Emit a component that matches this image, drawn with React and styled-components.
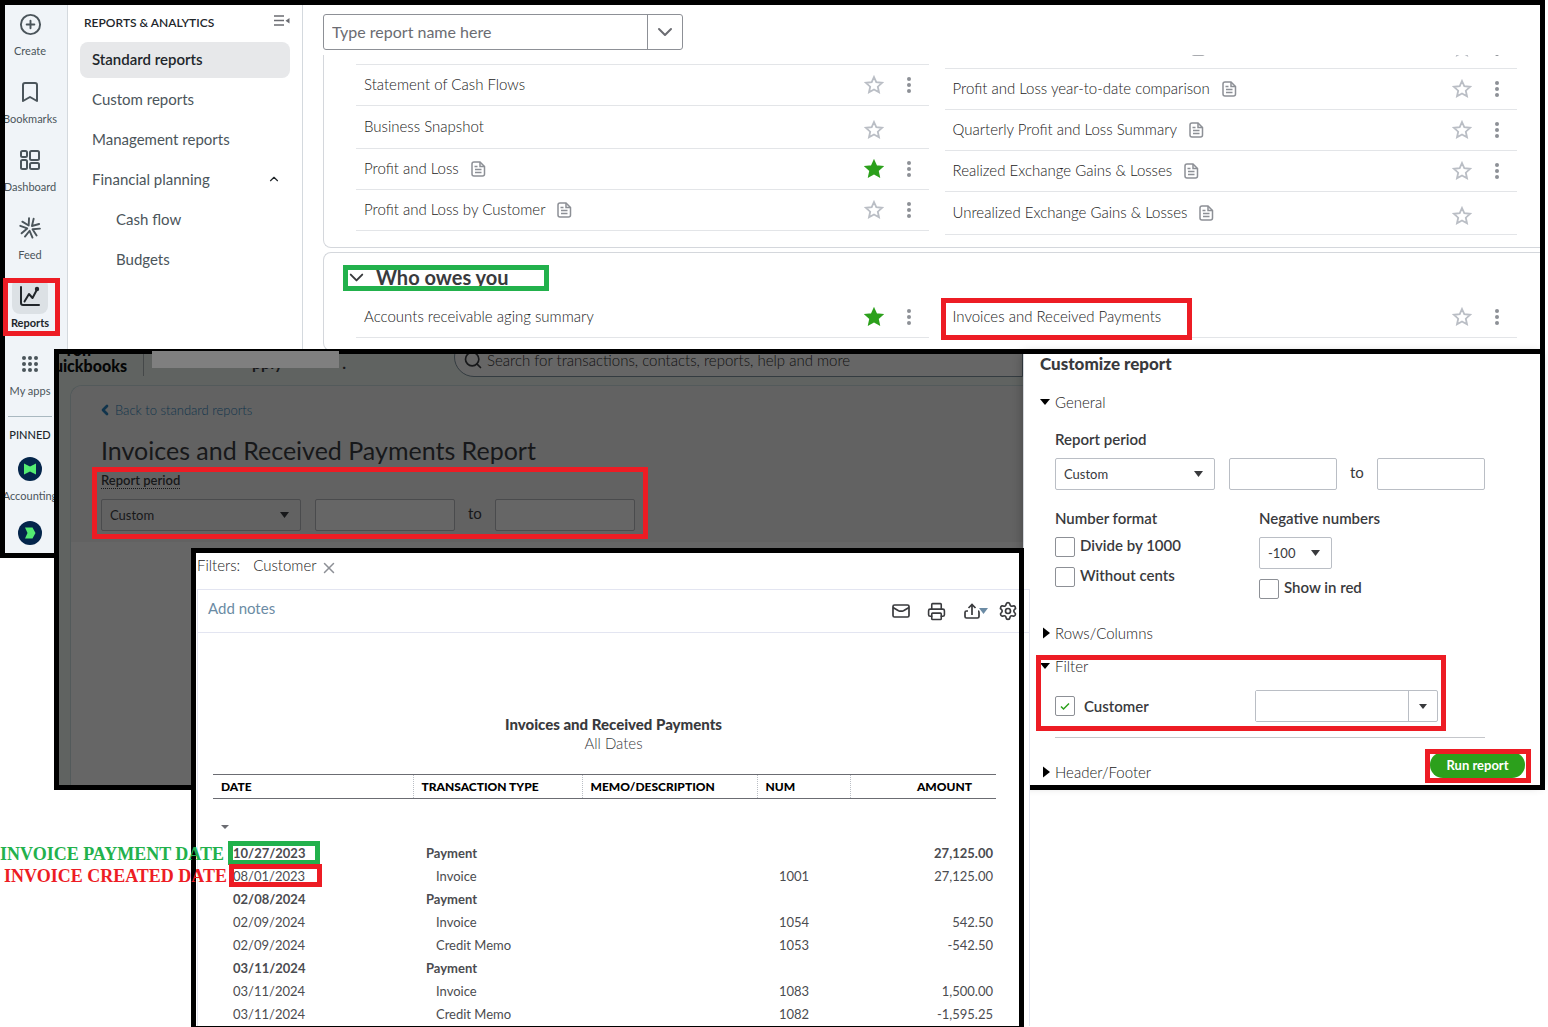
import React from "react";
import styled, { createGlobalStyle, css } from "styled-components";
import {
  Bookmark,
  ChevronDown,
  ChevronLeft,
  ChevronUp,
  CirclePlus,
  Printer,
  Search,
  Settings,
  X
} from "lucide-react";

const red = "#ed1c24";
const green = "#22b14c";
const ink = "#393a3d";
const slate = "#4b555b";

const GlobalStyle = createGlobalStyle`
  *, *::before, *::after {
    box-sizing: border-box;
  }
  body {
    margin: 0;
    background: #fff;
    color: ${ink};
    font-family: Lato, "Liberation Sans", sans-serif;
    font-size: 15px;
    line-height: 20px;
  }
  a {
    color: inherit;
    text-decoration: none;
  }
  button, input, select {
    font: inherit;
    color: inherit;
  }
  button {
    padding: 0;
    border: 0;
    background: none;
    cursor: pointer;
  }
  svg {
    display: block;
    flex: none;
  }
`;

const Canvas = styled.div`
  position: relative;
  min-width: 1280px;
  height: 100vh;
  min-height: 1027px;
  overflow: hidden;
`;

const Window = styled.section`
  position: absolute;
  display: flex;
  padding: 5px;
  background: #fff;

  &::after {
    content: "";
    position: absolute;
    inset: 0;
    border: 5px solid #000;
    pointer-events: none;
  }
`;

const ReportsWindow = styled(Window)`
  top: 0;
  left: 0;
  right: 3px;
`;

const CustomizeWindow = styled(Window)`
  top: 349px;
  left: 54px;
  right: 3px;
`;

const ResultWindow = styled(Window)`
  top: 548px;
  bottom: -4px;
  left: 191px;
  width: 833px;
  flex-direction: column;
  padding-right: 0;
`;

const Mark = styled.span`
  position: absolute;
  z-index: 1;
  inset: ${props => props.$inset};
  width: ${props => (props.$width ? `${props.$width}px` : "auto")};
  border: 5px solid ${props => (props.$green ? green : red)};
  pointer-events: none;
`;

/* icon rail */

const Rail = styled.nav`
  display: flex;
  flex: none;
  flex-direction: column;
  align-items: center;
  width: 63px;
  padding: 1px 12px 2px 0;
  border-right: 1px solid #d4d9de;
  background: #f0f4f8;
  color: ${slate};
`;

const RailLink = styled.a`
  position: relative;
  display: flex;
  flex-direction: column;
  align-items: center;
  margin-bottom: ${props => (props.$pinned ? 10 : 14)}px;
  font-size: 11px;
  line-height: 18px;
  white-space: nowrap;

  ${props =>
    props.$active &&
    css`
      color: #21262a;
      font-weight: 700;
    `}
`;

const RailIcon = styled.span`
  display: flex;
  align-items: center;
  justify-content: center;
  width: 36px;
  height: 36px;
  border-radius: 8px;
  background: ${props => (props.$active ? "#dce1e5" : "transparent")};
`;

const RailRule = styled.hr`
  width: 44px;
  margin: 2px 0 9px;
  border: 0;
  border-top: 1px solid #a9b8c0;
`;

const RailHeading = styled.div`
  margin-bottom: 7px;
  color: #21262a;
  font-size: 11px;
  font-weight: 500;
  line-height: 18px;
`;

/* reports menu */

const Menu = styled.nav`
  flex: none;
  width: 235px;
  padding: 6px 12px;
  border-right: 1px solid #d4d9de;
  color: ${slate};
`;

const MenuHeader = styled.div`
  display: flex;
  align-items: center;
  justify-content: space-between;
  padding: 0 0 0 4px;
  margin-bottom: 8px;
  color: #21262a;
  font-size: 12px;
  font-weight: 600;
  line-height: 23px;

  svg {
    margin-bottom: 3px;
  }
`;

const MenuLink = styled.a`
  display: flex;
  align-items: center;
  justify-content: space-between;
  height: 36px;
  margin-bottom: 4px;
  padding: 0 9px 3px ${props => (props.$nested ? 36 : 12)}px;
  border-radius: 8px;

  ${props =>
    props.$active &&
    css`
      background: #e7e8ea;
      color: #21262a;
      font-weight: 600;
    `}
`;

/* report list */

const Main = styled.main`
  flex: 1;
  min-width: 0;
  padding: 9px 0 0 20px;
  overflow: hidden;
`;

const ReportSearch = styled.form`
  display: flex;
  width: 360px;
  height: 36px;
  border: 1px solid #8d9096;
  border-radius: 3px;

  input {
    flex: 1;
    min-width: 0;
    padding: 0 8px;
    border: 0;
    background: none;
    font-size: 16px;
    outline: 0;
  }
  input::placeholder {
    color: #6b6c72;
    opacity: 1;
  }
  button {
    display: flex;
    align-items: center;
    justify-content: center;
    width: 35px;
    border-left: 1px solid #8d9096;
    color: #6b6c72;
  }
`;

const Scroller = styled.div`
  height: 294px;
  margin-top: 5px;
  overflow: hidden;
`;

const Card = styled.section`
  margin-bottom: 4px;
  padding: 12px 23px 12px 32px;
  border: 1px solid #d4d7dc;
  border-right: 0;
  border-radius: 8px 0 0 8px;

  ${props =>
    props.$scrolled &&
    css`
      margin-top: -40px;
    `}
`;

const CardTitle = styled.h2`
  position: relative;
  display: flex;
  align-items: center;
  gap: 8px;
  margin: 0 0 8px -11px;
  font-size: 20px;
  font-weight: 700;
  line-height: 24px;
`;

const Columns = styled.div`
  display: grid;
  grid-template-columns: 1fr 1fr;
  gap: 16px;
  align-items: start;
`;

const List = styled.ul`
  margin: 0;
  padding: 0;
  list-style: none;

  ${props =>
    props.$late &&
    css`
      margin-top: 36px;
      border-top: 1px solid #e3e5e8;
    `}
`;

const Row = styled.li`
  position: relative;
  display: flex;
  align-items: center;
  height: ${props => (props.$tall ? 43 : 41)}px;
  padding: 0 18px 0 8px;
  border-bottom: 1px solid #e3e5e8;
`;

const RowName = styled.a`
  display: flex;
  align-items: center;
  gap: 12px;
  margin-right: auto;
  padding-bottom: 2px;
  padding-left: ${props => (props.$blank ? 238 : 0)}px;
  color: #222;
  font-weight: 300;
  white-space: nowrap;

  svg {
    margin-top: 2px;
  }
`;

const RowActions = styled.span`
  display: flex;
  align-items: center;
  gap: 23px;

  ${props =>
    props.$noMenu &&
    css`
      padding: 6px 27px 0 0;
    `}
`;

/* dimmed app behind the drawer */

const Dimmed = styled.div`
  position: relative;
  flex: 1;
  min-width: 0;
  overflow: hidden;
  background: #606361;
  color: #17181a;
`;

const AppBar = styled.header`
  display: flex;
  height: 31px;
  overflow: hidden;
`;

const Brand = styled.div`
  display: flex;
  flex: 0 0 85px;
  flex-direction: column;
  align-items: flex-end;
  min-width: 0;
  height: 22px;
  margin-right: 8px;
  padding-right: 16px;
  border-right: 1px solid #454849;
  color: #050606;
  font-size: 16px;
  font-weight: 900;
  line-height: 16px;

  span {
    margin: -12px 36px 0 0;
  }
`;

const Company = styled.div`
  flex: none;
  display: flex;
  justify-content: space-between;
  width: 194px;
  padding-left: 100px;
  margin-right: 108px;
  font-size: 16px;
  font-weight: 700;
  line-height: 18px;
`;

const Redaction = styled.span`
  position: absolute;
  z-index: 1;
  top: 2px;
  left: 98px;
  width: 187px;
  height: 17px;
  background: #7f7f7f;
`;

const GlobalSearch = styled.label`
  display: flex;
  flex: 1;
  align-items: center;
  gap: 4px;
  height: 40px;
  margin-top: -17px;
  padding: 6px 8px 0;
  border: 1px solid #343c41;
  border-radius: 20px 0 0 20px;
  background: #666;
  white-space: nowrap;

  input {
    flex: 1;
    padding: 0;
    border: 0;
    background: none;
    font-weight: 300;
  }
  input::placeholder {
    color: #111;
    opacity: 1;
  }
`;

const Page = styled.div`
  height: 100%;
  margin-left: 11px;
  border: 1px solid #535a5b;
  border-right: 0;
  border-radius: 12px 0 0 0;
  background: #666;
`;

const PageHead = styled.div`
  height: 156px;
  padding: 14px 30px 0;
  border-radius: 12px 0 0 0;
  background: #626262;
`;

const BackLink = styled.a`
  display: flex;
  align-items: center;
  gap: 2px;
  margin-left: -4px;
  color: #10344c;
  font-size: 13px;
  font-weight: 300;
`;

const PageTitle = styled.h1`
  margin: 14px 0 7px;
  font-size: 25px;
  font-weight: 400;
  line-height: 32px;
`;

const Period = styled.div`
  position: relative;
`;

const PeriodLabel = styled.label`
  display: table;
  margin-bottom: 10px;
  border-bottom: 1px dotted #17181a;
  font-size: 13px;
  font-weight: 600;
  line-height: 15px;
`;

const Fields = styled.div`
  display: flex;
  align-items: center;

  span {
    margin: 0 13px 4px;
  }
`;

const Field = styled.input`
  width: ${props => props.$width}px;
  height: 32px;
  padding: 0 8px;
  border: 1px solid ${props => (props.$dim ? "#4a4b4d" : "#babec5")};
  border-radius: 2px;
  background: ${props => (props.$dim ? "#666" : "#fff")};
`;

const SelectBox = styled.div`
  position: relative;
  width: ${props => props.$width}px;
  margin-right: 14px;

  select {
    display: block;
    width: 100%;
    height: 32px;
    padding: 0 8px;
    appearance: none;
    border: 1px solid ${props => (props.$dim ? "#4a4b4d" : "#babec5")};
    border-radius: 2px;
    background: transparent;
    font-size: 13px;
  }
  svg {
    position: absolute;
    top: 13px;
    right: 12px;
    pointer-events: none;
  }
`;

/* customize drawer */

const Drawer = styled.aside`
  position: relative;
  flex: none;
  width: 517px;
  padding: 0 15px 0 16px;
  border-left: 1px solid #d4d7dc;
  background: #fff;
  box-shadow: 0 0 10px rgba(0, 0, 0, 0.3);
`;

const DrawerTitle = styled.h2`
  margin: 0 0 18px;
  font-size: 17px;
  font-weight: 900;
  line-height: 20px;
`;

const Toggle = styled.button`
  display: flex;
  align-items: center;
  gap: 5px;
  margin-top: ${props => props.$gap || 0}px;
  color: #222;
  font-weight: 300;
  line-height: 20px;

  svg {
    color: #000;
  }
`;

const Section = styled.div`
  width: 430px;
  margin: ${props => props.$margin};
  margin-left: 15px;
`;

const Label = styled.label`
  display: block;
  margin-bottom: 9px;
  font-weight: 600;
`;

const Formats = styled.div`
  display: grid;
  grid-template-columns: 204px 1fr;
  margin-top: 18px;
`;

const Check = styled.label`
  display: flex;
  align-items: ${props => (props.$center ? "center" : "flex-start")};
  gap: ${props => (props.$center ? 9 : 5)}px;
  font-weight: 600;
  line-height: 16px;

  & + &, div + & {
    margin-top: 10px;
  }
  input {
    display: block;
    width: 20px;
    height: 20px;
    margin: 0;
    appearance: none;
    border: 1px solid #8d9096;
    border-radius: 2px;
  }
  span {
    position: relative;
  }
  svg {
    position: absolute;
    top: 5px;
    left: 5px;
  }
`;

const Subheading = styled.h3`
  margin: 0 0 9px;
  font-size: 15px;
  font-weight: 600;
`;

const FilterRow = styled.div`
  position: relative;
  display: grid;
  grid-template-columns: 200px 183px;
  align-items: center;
  padding-bottom: 15px;
  border-bottom: 1px solid #c4c6ca;
`;

const Combo = styled.div`
  display: flex;
  height: 32px;
  border: 1px solid #babec5;
  border-radius: 2px;

  input {
    flex: 1;
    min-width: 0;
    border: 0;
  }
  button {
    display: flex;
    align-items: center;
    justify-content: center;
    width: 29px;
    border-left: 1px solid #babec5;
  }
`;

const DrawerFoot = styled.div`
  display: flex;
  align-items: flex-start;
  justify-content: space-between;
  height: 33px;
`;

const RunBox = styled.div`
  position: relative;
`;

const RunButton = styled.button`
  width: 95px;
  height: 26px;
  border-radius: 13px;
  background: #2ca01c;
  color: #fff;
  font-size: 13px;
  font-weight: 700;
`;

/* report result */

const FilterBar = styled.div`
  display: flex;
  align-items: flex-start;
  height: 36px;
  padding: 2px 0 0 1px;
  color: #222;
  font-weight: 300;

  span {
    margin-right: 13px;
  }
  button {
    margin: 4px 0 0 3px;
    color: #8d9096;
  }
`;

const Sheet = styled.div`
  flex: 1;
  margin: 0 -6px 0 1px;
  border: 1px solid #e3e5f1;
  border-bottom: 0;
  background: #fff;
`;

const Toolbar = styled.div`
  display: flex;
  align-items: center;
  height: 43px;
  padding: 0 11px 0 10px;
  border-bottom: 1px solid #e3e5f1;
`;

const Notes = styled.button`
  margin: 0 auto 6px 0;
  color: #6b8ba4;
`;

const Tool = styled.button`
  display: flex;
  margin-left: ${props => props.$gap}px;
`;

const SheetTitle = styled.header`
  padding: 81px 0 21px;
  font-weight: 300;
  line-height: 19px;
  text-align: center;

  h3 {
    margin: 0;
    font-size: 15px;
    font-weight: 900;
    line-height: 20px;
  }
`;

const Table = styled.table`
  width: calc(100% - 48px);
  margin-left: 15px;
  table-layout: fixed;
  border-collapse: collapse;

  th {
    height: 24px;
    padding: 0 8px;
    border-top: 1px solid #6b6c72;
    border-bottom: 1px solid #6b6c72;
    border-left: 1px dotted #babec5;
    color: #000;
    font-size: 12px;
    font-weight: 900;
    line-height: 16px;
    text-align: left;
    white-space: nowrap;
  }
  th:first-child {
    border-left: 0;
  }
  th:last-child {
    padding-right: 24px;
    text-align: right;
  }
`;

const Line = styled.tr`
  height: 23px;
  color: #4b4c50;
  font-size: 13px;
  font-weight: ${props => (props.$strong ? 700 : 400)};

  td {
    position: relative;
    padding: 0 3px 0 20px;
    line-height: 20px;
  }
  td:nth-child(2) {
    padding-left: ${props => (props.$strong ? 13 : 23)}px;
  }
  td:nth-child(4) {
    padding-left: 22px;
  }
  td:last-child {
    text-align: right;
  }
`;

const CaretRow = styled.tr`
  td {
    height: 43px;
    padding: 14px 0 0 8px;
  }
`;

const Caption = styled.p`
  position: absolute;
  z-index: 2;
  top: ${props => props.$top}px;
  left: ${props => props.$left}px;
  margin: 0;
  color: ${props => (props.$green ? green : red)};
  font-family: "Liberation Serif", serif;
  font-size: 18px;
  font-weight: 700;
  line-height: 22px;
  white-space: nowrap;
`;

/* drawings */

const Caret = ({ width = 10, height = 6, color = "#393a3d" }) => (
  <svg
    width={width}
    height={height}
    viewBox="0 0 10 6"
    preserveAspectRatio="none"
  >
    <path d="M0 0h10L5 6z" fill={color} />
  </svg>
);

const CaretRight = () => (
  <svg width="10" height="12" viewBox="0 0 10 12">
    <path d="M3 0.500v11l7-5.500z" fill="currentColor" />
  </svg>
);

const Star = ({ filled }) => (
  <svg width="20" height="20" viewBox="0 0 20 20">
    <path
      d="M10 2l2.300 5.200 5.700.600-4.200 3.900 1.200 5.600-5-2.800-5 2.800 1.200-5.600L2 7.800l5.700-.600z"
      fill={filled ? "#2ca01c" : "none"}
      stroke={filled ? "#2ca01c" : "#babec5"}
      strokeWidth="1.800"
    />
  </svg>
);

const Kebab = () => (
  <svg width="4" height="16" viewBox="0 0 4 16" fill="#8d9096">
    <circle cx="2" cy="2" r="2" />
    <circle cx="2" cy="8" r="2" />
    <circle cx="2" cy="14" r="2" />
  </svg>
);

const FileIcon = () => (
  <svg
    width="15"
    height="16"
    viewBox="0 0 15 16"
    fill="none"
    stroke="#8d9096"
    strokeWidth="1.500"
  >
    <path d="M9 1H3a2 2 0 0 0-2 2v10a2 2 0 0 0 2 2h8.500a2 2 0 0 0 2-2V5.500z" />
    <path d="M9 1v4.500h4.500M3.500 5.500h3M4 8.500h6.500M4 11.500h6.500" />
  </svg>
);

const DashboardIcon = () => (
  <svg
    width="20"
    height="20"
    viewBox="0 0 20 20"
    fill="none"
    stroke="currentColor"
    strokeWidth="2"
  >
    <rect x="1" y="1" width="6" height="6" rx="1.500" />
    <rect x="10" y="1" width="9" height="9" rx="1.500" />
    <rect x="1" y="10" width="6" height="9" rx="1.500" />
    <rect x="10" y="13" width="9" height="6" rx="1.500" />
  </svg>
);

const FeedIcon = () => (
  <svg
    width="22"
    height="22"
    viewBox="0 0 22 22"
    fill="none"
    stroke="currentColor"
    strokeWidth="1.900"
    strokeLinecap="round"
    strokeLinejoin="round"
  >
    {[0, 72, 144, 216, 288].map(angle => (
      <path
        key={angle}
        d="M7.200 20.200L11 13.800l3.800 6.400"
        transform={`rotate(${angle + 8} 11 11)`}
      />
    ))}
  </svg>
);

const ReportsIcon = () => (
  <svg
    width="20"
    height="20"
    viewBox="0 0 20 20"
    fill="none"
    stroke="currentColor"
    strokeWidth="2"
    strokeLinecap="round"
    strokeLinejoin="round"
  >
    <path d="M1 1v16a2 2 0 0 0 2 2h16M4.500 15.500L9 8l3.500 4L17 3.500" />
    <circle cx="17" cy="3" r="1.200" fill="currentColor" />
  </svg>
);

const AppsIcon = () => (
  <svg width="16" height="16" viewBox="0 0 16 16" fill="currentColor">
    {[2, 8, 14].map(y =>
      [2, 8, 14].map(x => <circle key={`${x}-${y}`} cx={x} cy={y} r="2" />)
    )}
  </svg>
);

const PinnedIcon = ({ d }) => (
  <svg width="24" height="24" viewBox="0 0 24 24">
    <circle cx="12" cy="12" r="12" fill="#04254b" />
    <path d={d} fill="#53ec72" />
  </svg>
);

const CollapseIcon = () => (
  <svg width="16" height="12" viewBox="0 0 16 12">
    <path d="M0 1h10M0 5.500h10M0 10h10" stroke="#6b6c72" strokeWidth="1.500" />
    <path d="M15.500 3v5.500l-4-2.750z" fill="#6b6c72" />
  </svg>
);

const MailIcon = () => (
  <svg
    width="18"
    height="14"
    viewBox="0 0 18 14"
    fill="none"
    stroke={ink}
    strokeWidth="1.700"
  >
    <rect x="1" y="1" width="16" height="12" rx="1.500" />
    <path d="M1 3.500l5.500 3.200q2.500 1 5 0L17 3.500" />
  </svg>
);

const ExportIcon = () => (
  <svg
    width="24"
    height="16"
    viewBox="0 0 24 16"
    fill="none"
    stroke={ink}
    strokeWidth="1.700"
  >
    <path d="M4 8H2.500Q1 8 1 9.500V13.500Q1 15 2.500 15h11q1.500 0 1.500-1.500v-4Q15 8 14 8" />
    <path d="M8 12V1.500M4.500 5L8 1.500 11.500 5" />
    <path d="M15 5h9l-4.500 6z" fill="#6b8ba4" stroke="none" />
  </svg>
);

const railItems = [
  { label: "Create", icon: <CirclePlus size={23} strokeWidth={2} /> },
  { label: "Bookmarks", icon: <Bookmark size={24} strokeWidth={2} /> },
  { label: "Dashboard", icon: <DashboardIcon /> },
  { label: "Feed", icon: <FeedIcon /> },
  { label: "Reports", icon: <ReportsIcon />, active: true },
  { label: "My apps", icon: <AppsIcon /> }
];

const leftReports = [
  { name: "Statement of Cash Flows" },
  { name: "Business Snapshot", noMenu: true },
  { name: "Profit and Loss", file: true, starred: true },
  { name: "Profit and Loss by Customer", file: true }
];

const rightReports = [
  { name: "", file: true },
  { name: "Profit and Loss year-to-date comparison", file: true },
  { name: "Quarterly Profit and Loss Summary", file: true },
  { name: "Realized Exchange Gains & Losses", file: true },
  { name: "Unrealized Exchange Gains & Losses", file: true, noMenu: true }
];

const lines = [
  { date: "10/27/2023", type: "Payment", amount: "27,125.00" },
  { date: "08/01/2023", type: "Invoice", num: "1001", amount: "27,125.00" },
  { date: "02/08/2024", type: "Payment" },
  { date: "02/09/2024", type: "Invoice", num: "1054", amount: "542.50" },
  { date: "02/09/2024", type: "Credit Memo", num: "1053", amount: "-542.50" },
  { date: "03/11/2024", type: "Payment" },
  { date: "03/11/2024", type: "Invoice", num: "1083", amount: "1,500.00" },
  { date: "03/11/2024", type: "Credit Memo", num: "1082", amount: "-1,595.25" }
];

const ReportRow = ({ report, children }) => (
  <Row $tall={report.noMenu}>
    <RowName href="#report" $blank={!report.name}>
      {report.name}
      {report.file && <FileIcon />}
    </RowName>
    <RowActions $noMenu={report.noMenu}>
      <button aria-label="Favourite">
        <Star filled={report.starred} />
      </button>
      {!report.noMenu && (
        <button aria-label="More actions">
          <Kebab />
        </button>
      )}
    </RowActions>
    {children}
  </Row>
);

const Reports = () => (
  <ReportsWindow>
    <Rail>
      {railItems.map(item => (
        <RailLink key={item.label} href="#app" $active={item.active}>
          <RailIcon $active={item.active}>{item.icon}</RailIcon>
          {item.label}
          {item.active && <Mark $inset="0 auto -4px -8px" $width={57} />}
        </RailLink>
      ))}
      <RailRule />
      <RailHeading>PINNED</RailHeading>
      <RailLink href="#accounting" $pinned>
        <RailIcon>
          <PinnedIcon d="M6 6.500l6 3 6-3v11l-6-3-6 3z" />
        </RailIcon>
        Accounting
      </RailLink>
      <RailIcon>
        <PinnedIcon d="M7 6.500h7.500l3 5.500-3 5.500H7l2.500-5.500z" />
      </RailIcon>
    </Rail>
    <Menu>
      <MenuHeader>
        REPORTS &amp; ANALYTICS
        <button aria-label="Collapse menu">
          <CollapseIcon />
        </button>
      </MenuHeader>
      <MenuLink href="#standard" $active>
        Standard reports
      </MenuLink>
      <MenuLink href="#custom">Custom reports</MenuLink>
      <MenuLink href="#management">Management reports</MenuLink>
      <MenuLink href="#planning">
        Financial planning
        <ChevronUp size={14} color="#21262a" />
      </MenuLink>
      <MenuLink href="#cash" $nested>
        Cash flow
      </MenuLink>
      <MenuLink href="#budgets" $nested>
        Budgets
      </MenuLink>
    </Menu>
    <Main>
      <ReportSearch>
        <input aria-label="Report name" placeholder="Type report name here" />
        <button type="button" aria-label="Show reports">
          <ChevronDown size={24} />
        </button>
      </ReportSearch>
      <Scroller>
        <Card $scrolled>
          <Columns>
            <List $late>
              {leftReports.map(report => (
                <ReportRow key={report.name} report={report} />
              ))}
            </List>
            <List>
              {rightReports.map(report => (
                <ReportRow key={report.name} report={report} />
              ))}
            </List>
          </Columns>
        </Card>
        <Card>
          <CardTitle>
            <ChevronDown size={23} />
            Who owes you
            <Mark $green $inset="0 auto -2px -2px" $width={206} />
          </CardTitle>
          <Columns>
            <List>
              <ReportRow
                report={{
                  name: "Accounts receivable aging summary",
                  starred: true
                }}
              />
            </List>
            <List>
              <ReportRow report={{ name: "Invoices and Received Payments" }}>
                <Mark $inset="1px auto -3px -4px" $width={251} />
              </ReportRow>
            </List>
          </Columns>
        </Card>
      </Scroller>
    </Main>
  </ReportsWindow>
);

const Customize = () => (
  <CustomizeWindow>
    <Dimmed>
      <AppBar>
        <Brand>
          <span>ron</span>
          uickbooks
        </Brand>
        <Company>
          <span>pply</span>
          <span>.</span>
        </Company>
        <GlobalSearch>
          <Search size={20} />
          <input
            aria-label="Search"
            placeholder="Search for transactions, contacts, reports, help and more"
          />
        </GlobalSearch>
      </AppBar>
      <Page>
        <PageHead>
          <BackLink href="#back">
            <ChevronLeft size={16} strokeWidth={4} />
            Back to standard reports
          </BackLink>
          <PageTitle>Invoices and Received Payments Report</PageTitle>
          <Period>
            <PeriodLabel htmlFor="page-period">Report period</PeriodLabel>
            <Fields>
              <SelectBox $dim $width={200}>
                <select id="page-period">
                  <option>Custom</option>
                </select>
                <Caret width={9} color="#17181a" />
              </SelectBox>
              <Field $dim $width={140} aria-label="From" />
              <span>to</span>
              <Field $dim $width={140} aria-label="To" />
            </Fields>
            <Mark $inset="-6px auto -8px -9px" $width={556} />
          </Period>
        </PageHead>
      </Page>
    </Dimmed>
    <Redaction />
    <Drawer>
      <DrawerTitle>Customize report</DrawerTitle>
      <Toggle>
        <Caret color="#000" />
        General
      </Toggle>
      <Section $margin="17px 0 24px">
        <Label htmlFor="period">Report period</Label>
        <Fields>
          <SelectBox $width={160}>
            <select id="period">
              <option>Custom</option>
            </select>
            <Caret width={9} />
          </SelectBox>
          <Field $width={108} aria-label="From" />
          <span>to</span>
          <Field $width={108} aria-label="To" />
        </Fields>
        <Formats>
          <div>
            <Subheading>Number format</Subheading>
            <Check>
              <input type="checkbox" />
              Divide by 1000
            </Check>
            <Check>
              <input type="checkbox" />
              Without cents
            </Check>
          </div>
          <div>
            <Label htmlFor="negative">Negative numbers</Label>
            <SelectBox $width={73}>
              <select id="negative">
                <option>-100</option>
              </select>
              <Caret width={9} />
            </SelectBox>
            <Check>
              <input type="checkbox" />
              Show in red
            </Check>
          </div>
        </Formats>
      </Section>
      <Toggle>
        <CaretRight />
        Rows/Columns
      </Toggle>
      <Toggle $gap={13}>
        <Caret color="#000" />
        Filter
      </Toggle>
      <Section $margin="14px 0">
        <FilterRow>
          <Check $center>
            <span>
              <input type="checkbox" defaultChecked />
              <svg width="10" height="10" viewBox="0 0 10 10">
                <path
                  d="M1 5.500l2.500 2.500L9 2.500"
                  fill="none"
                  stroke="#2ca01c"
                  strokeWidth="1.500"
                />
              </svg>
            </span>
            Customer
          </Check>
          <Combo>
            <input aria-label="Customer name" />
            <button aria-label="Show customers">
              <Caret width={8} height={5} />
            </button>
          </Combo>
          <Mark $inset="-35px auto 6px -19px" $width={410} />
        </FilterRow>
      </Section>
      <DrawerFoot>
        <Toggle $gap={10}>
          <CaretRight />
          Header/Footer
        </Toggle>
        <RunBox>
          <RunButton>Run report</RunButton>
          <Mark $inset="-3px -6px -5px -5px" />
        </RunBox>
      </DrawerFoot>
    </Drawer>
  </CustomizeWindow>
);

const Result = () => (
  <ResultWindow>
    <FilterBar>
      <span>Filters:</span>
      Customer
      <button aria-label="Remove filter">
        <X size={18} />
      </button>
    </FilterBar>
    <Sheet>
      <Toolbar>
        <Notes>Add notes</Notes>
        <Tool aria-label="Email">
          <MailIcon />
        </Tool>
        <Tool aria-label="Print" $gap={17}>
          <Printer size={19} color={ink} />
        </Tool>
        <Tool aria-label="Export" $gap={18}>
          <ExportIcon />
        </Tool>
        <Tool aria-label="Settings" $gap={10}>
          <Settings size={20} color={ink} />
        </Tool>
      </Toolbar>
      <SheetTitle>
        <h3>Invoices and Received Payments</h3>
        All Dates
      </SheetTitle>
      <Table>
        <colgroup>
          <col width="200" />
          <col width="169" />
          <col width="175" />
          <col width="93" />
          <col />
        </colgroup>
        <thead>
          <tr>
            <th>DATE</th>
            <th>TRANSACTION TYPE</th>
            <th>MEMO/DESCRIPTION</th>
            <th>NUM</th>
            <th>AMOUNT</th>
          </tr>
        </thead>
        <tbody>
          <CaretRow>
            <td colSpan="5">
              <Caret width={8} height={4} color="#6b6c72" />
            </td>
          </CaretRow>
          {lines.map((line, index) => (
            <Line key={index} $strong={line.type === "Payment"}>
              <td>
                {line.date}
                {index === 0 && (
                  <Mark $green $inset="-1px auto 0 15px" $width={92} />
                )}
                {index === 1 && <Mark $inset="-1px auto 1px 16px" $width={93} />}
              </td>
              <td>{line.type}</td>
              <td />
              <td>{line.num}</td>
              <td>{line.amount}</td>
            </Line>
          ))}
        </tbody>
      </Table>
    </Sheet>
  </ResultWindow>
);

const App = () => (
  <Canvas>
    <GlobalStyle />
    <Reports />
    <Customize />
    <Result />
    <Caption $green $top={843} $left={0}>
      INVOICE PAYMENT DATE
    </Caption>
    <Caption $top={865} $left={4}>
      INVOICE CREATED DATE
    </Caption>
  </Canvas>
);

export default App;
